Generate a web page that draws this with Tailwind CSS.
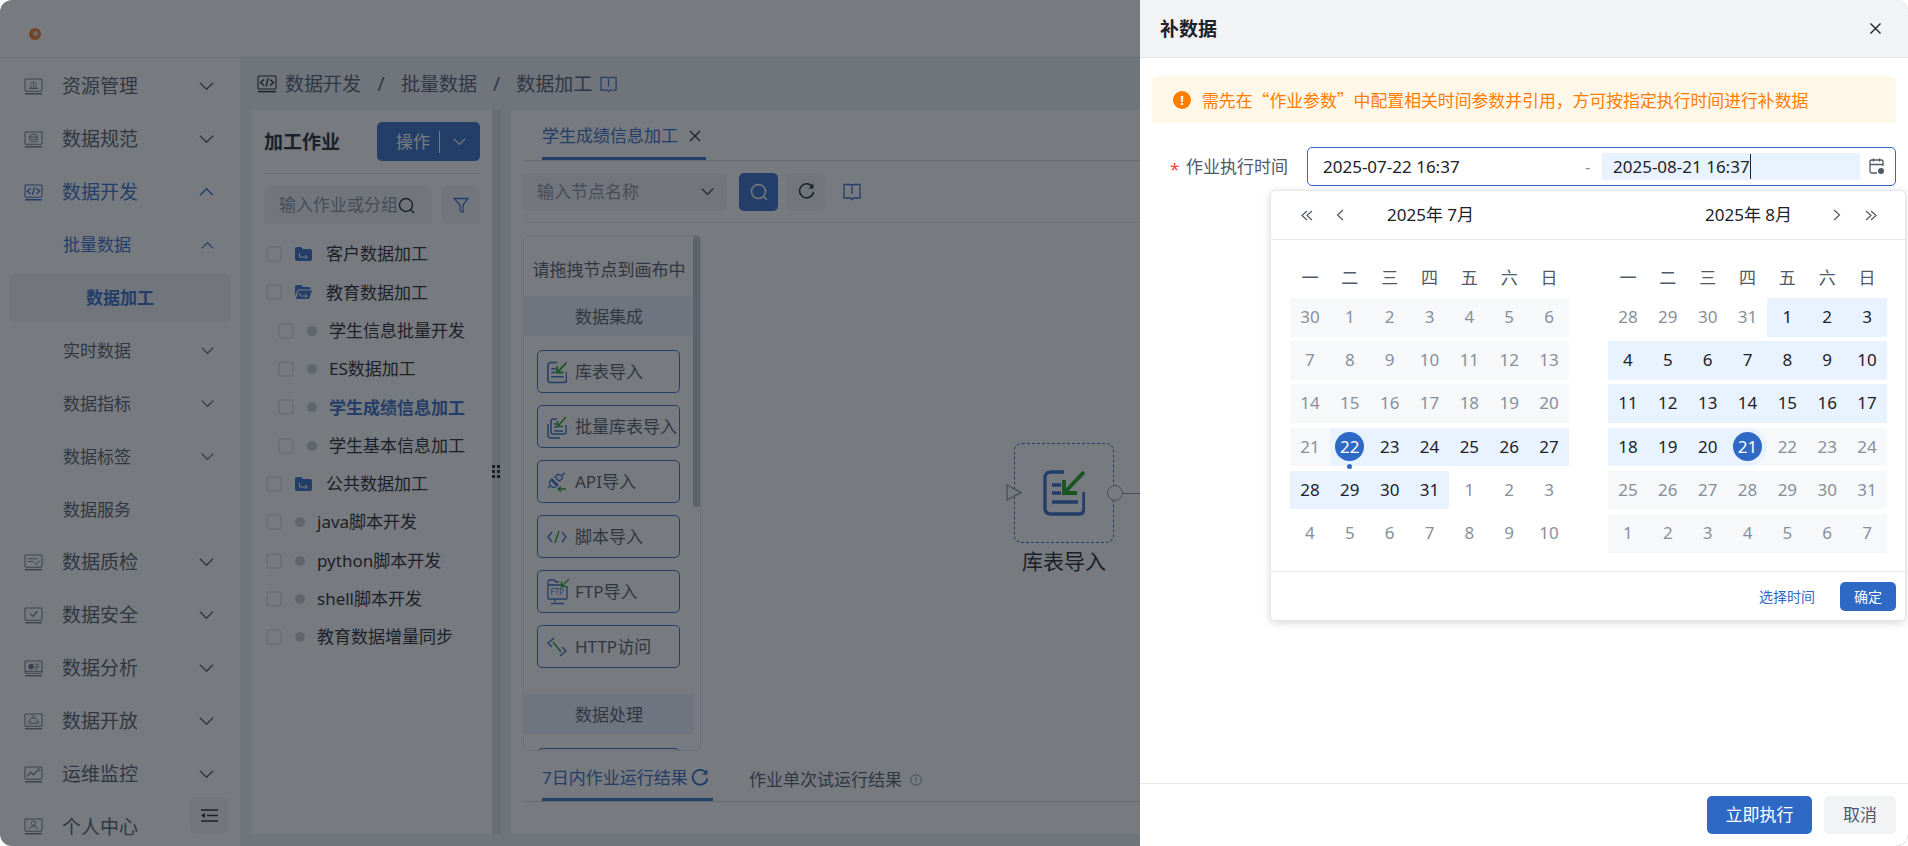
<!DOCTYPE html>
<html lang="zh-CN">
<head>
  <meta charset="UTF-8">
  <title>补数据</title>
  <script src="https://cdn.jsdelivr.net/npm/@tailwindcss/browser@4"></script>
</head>
<body class="bg-white overflow-hidden [font-family:'Noto_Sans','Noto_Sans_CJK_SC',sans-serif]">
<svg class="hidden">
  <symbol id="imp" viewBox="0 0 42 46">
    <path d="M21 2H8Q2 2 2 8V38Q2 44 8 44H36Q41 44 41 38V22M9 15H18M9 23H18M9 32H35" fill="none" stroke="#2f69c6" stroke-width="3.4"/>
    <path d="M41 2 22 22M21 10V23H34" fill="none" stroke="#14a014" stroke-width="3.8"/>
  </symbol>
  <symbol id="mon" viewBox="0 0 20 18">
    <rect x="1" y="1" width="18" height="13" rx="1" fill="none" stroke="currentColor" stroke-width="1.1"/>
    <path d="M1 16.6H19" stroke="currentColor" stroke-width="1.5"/>
  </symbol>
  <symbol id="down" viewBox="0 0 16 10">
    <path d="M1 1.5 8 8.5 15 1.5" fill="none" stroke="currentColor" stroke-width="1.5"/>
  </symbol>
  <symbol id="up" viewBox="0 0 16 10">
    <path d="M1 8.5 8 1.5 15 8.5" fill="none" stroke="currentColor" stroke-width="1.5"/>
  </symbol>
  <symbol id="fold" viewBox="0 0 17 14">
    <path d="M0 2Q0 0 2 0H6L8 2H15Q17 2 17 4V12Q17 14 15 14H2Q0 14 0 12Z" fill="#2f69c6"/>
    <path d="M4.5 6V10H12M10 8 12.3 10 10 12" fill="none" stroke="#fff" stroke-width="1"/>
  </symbol>
  <symbol id="foldopen" viewBox="0 0 17 14">
    <path d="M0 2Q0 0 2 0H6L8 2H14Q15.500 2 15.500 3.500V4.500H3L0 11Z" fill="#2f69c6"/>
    <path d="M3.500 5.500H17L14.500 13Q14.200 14 13 14H1Z" fill="#2f69c6"/>
    <path d="M5 8V11H12M10 9 12.300 11 10 13" fill="none" stroke="#fff" stroke-width="1"/>
  </symbol>
  <symbol id="book" viewBox="0 0 18 18">
    <path d="M1 1.5H7Q9 1.5 9 3.5 9 1.5 11 1.5H17V15H10.5L9 16.5 7.5 15H1ZM9 4V11" fill="none" stroke="#2f69c6" stroke-width="1.3"/>
  </symbol>
</svg>

<div class="relative h-[846px] w-[1908px] overflow-hidden rounded-[12px] bg-white">
  <!-- page under the mask -->
  <div class="h-full flex flex-col">
    <div class="h-[58px] shrink-0 flex items-center pl-[29px] pt-[10px] border-b border-[#e5e6eb]">
      <div class="w-[12px] h-[12px] rounded-full bg-[#f5781e] flex items-center justify-center"><div class="w-[5px] h-[5px] rounded-full bg-[#e8d8c8]"></div></div>
    </div>
    <div class="flex-1 flex min-h-0">
      <!-- 사이드바 -->
      <div class="relative w-[240px] shrink-0 pt-[2px] text-[#4e5969]">
        <div class="h-[52.9px] flex items-center pl-[24px] pr-[26px] text-[19px]">
          <svg class="w-[19px] h-[17px] text-[#6b7585]" viewBox="0 0 20 18"><use href="#mon"/><path d="M5 11H15M7.500 11V8M10 11V5.500M12.500 11V8M6 6.500 10 4 14 6.500" fill="none" stroke="currentColor"/></svg><span class="ml-[19px] flex-1">资源管理</span><svg class="w-[15px] h-[10px]"><use href="#down"/></svg>
        </div>
        <div class="h-[52.9px] flex items-center pl-[24px] pr-[26px] text-[19px]">
          <svg class="w-[19px] h-[17px] text-[#6b7585]" viewBox="0 0 20 18"><use href="#mon"/><ellipse cx="10" cy="5" rx="4" ry="1.500" fill="none" stroke="currentColor"/><path d="M6 5V10Q6 11.500 10 11.500T14 10V5M6 7.500Q6 9 10 9T14 7.500" fill="none" stroke="currentColor"/></svg><span class="ml-[19px] flex-1">数据规范</span><svg class="w-[15px] h-[10px]"><use href="#down"/></svg>
        </div>
        <div class="h-[52.9px] flex items-center pl-[24px] pr-[26px] text-[19px] text-[#2f69c6]">
          <svg class="w-[19px] h-[17px]" viewBox="0 0 20 18"><use href="#mon"/><path d="M7 4.500 3.500 7.500 7 10.500M13 4.500 16.500 7.500 13 10.500M11 3.500 9 11.500" fill="none" stroke="currentColor" stroke-width="1.400"/></svg><span class="ml-[19px] flex-1">数据开发</span><svg class="w-[15px] h-[10px]"><use href="#up"/></svg>
        </div>
        <div class="h-[52.9px] flex items-center pl-[63px] pr-[26px] text-[17px] text-[#2f69c6]">
          <span class="flex-1">批量数据</span><svg class="w-[13px] h-[9px]"><use href="#up"/></svg>
        </div>
        <div class="h-[52.9px] flex items-center px-[10px] text-[17px]">
          <div class="w-[221px] h-[48px] rounded-[5px] bg-[#f2f3f5] text-[#2f69c6] font-bold flex items-center justify-center">数据加工</div>
        </div>
        <div class="h-[52.9px] flex items-center pl-[63px] pr-[26px] text-[17px]">
          <span class="flex-1">实时数据</span><svg class="w-[13px] h-[9px]"><use href="#down"/></svg>
        </div>
        <div class="h-[52.9px] flex items-center pl-[63px] pr-[26px] text-[17px]">
          <span class="flex-1">数据指标</span><svg class="w-[13px] h-[9px]"><use href="#down"/></svg>
        </div>
        <div class="h-[52.9px] flex items-center pl-[63px] pr-[26px] text-[17px]">
          <span class="flex-1">数据标签</span><svg class="w-[13px] h-[9px]"><use href="#down"/></svg>
        </div>
        <div class="h-[52.9px] flex items-center pl-[63px] pr-[26px] text-[17px]">
          <span class="flex-1">数据服务</span>
        </div>
        <div class="h-[52.9px] flex items-center pl-[24px] pr-[26px] text-[19px]">
          <svg class="w-[19px] h-[17px] text-[#6b7585]" viewBox="0 0 20 18"><use href="#mon"/><path d="M4 5H14M4 8H10M11 9 13 11 16 7" fill="none" stroke="currentColor"/></svg><span class="ml-[19px] flex-1">数据质检</span><svg class="w-[15px] h-[10px]"><use href="#down"/></svg>
        </div>
        <div class="h-[52.9px] flex items-center pl-[24px] pr-[26px] text-[19px]">
          <svg class="w-[19px] h-[17px] text-[#6b7585]" viewBox="0 0 20 18"><use href="#mon"/><path d="M6.500 7 9.500 10 14 4.500" fill="none" stroke="currentColor" stroke-width="1.300"/></svg><span class="ml-[19px] flex-1">数据安全</span><svg class="w-[15px] h-[10px]"><use href="#down"/></svg>
        </div>
        <div class="h-[52.9px] flex items-center pl-[24px] pr-[26px] text-[19px]">
          <svg class="w-[19px] h-[17px] text-[#6b7585]" viewBox="0 0 20 18"><use href="#mon"/><circle cx="7.500" cy="7" r="3" fill="currentColor"/><path d="M11.500 4.500H16M11.500 7H16M11.500 9.500H14" stroke="currentColor" stroke-width="1.300"/><path d="M1 12H19" stroke="currentColor"/></svg><span class="ml-[19px] flex-1">数据分析</span><svg class="w-[15px] h-[10px]"><use href="#down"/></svg>
        </div>
        <div class="h-[52.9px] flex items-center pl-[24px] pr-[26px] text-[19px]">
          <svg class="w-[19px] h-[17px] text-[#6b7585]" viewBox="0 0 20 18"><use href="#mon"/><circle cx="10" cy="4.500" r="1.500" fill="none" stroke="currentColor"/><circle cx="6" cy="10" r="1.500" fill="none" stroke="currentColor"/><circle cx="14" cy="10" r="1.500" fill="none" stroke="currentColor"/><path d="M8 5 5.500 8M12 5 14.500 8M8 11H12" fill="none" stroke="currentColor"/></svg><span class="ml-[19px] flex-1">数据开放</span><svg class="w-[15px] h-[10px]"><use href="#down"/></svg>
        </div>
        <div class="h-[52.9px] flex items-center pl-[24px] pr-[26px] text-[19px]">
          <svg class="w-[19px] h-[17px] text-[#6b7585]" viewBox="0 0 20 18"><use href="#mon"/><path d="M3.500 11 7 6.500 10 9.500 14 5" fill="none" stroke="currentColor" stroke-width="1.200"/><circle cx="15.500" cy="4" r="1.400" fill="none" stroke="currentColor"/></svg><span class="ml-[19px] flex-1">运维监控</span><svg class="w-[15px] h-[10px]"><use href="#down"/></svg>
        </div>
        <div class="h-[52.9px] flex items-center pl-[24px] pr-[26px] text-[19px]">
          <svg class="w-[19px] h-[17px] text-[#6b7585]" viewBox="0 0 20 18"><use href="#mon"/><circle cx="10" cy="5.500" r="2.300" fill="none" stroke="currentColor"/><path d="M5.500 12Q6 8.500 10 8.500T14.500 12" fill="none" stroke="currentColor"/></svg><span class="ml-[19px] flex-1">个人中心</span>
        </div>
        <div class="absolute left-[190px] bottom-[12px] w-[38px] h-[37px] rounded-[5px] bg-[#f2f3f5] flex items-center justify-center">
          <svg class="w-[17px] h-[13px]" viewBox="0 0 17 13"><path d="M0 1H17M6 6.5H17M0 12H17" stroke="#1d2129" stroke-width="1.4"/><path d="M0 6.5 4 4V9Z" fill="#1d2129"/></svg>
        </div>
      </div>

      <!-- 메인 콘텐츠 -->
      <div class="flex-1 min-w-0 bg-[#edf0f5] flex flex-col">
        <div class="h-[52px] shrink-0 flex items-center pl-[17px] text-[19px] text-[#4e5969]">
          <svg class="w-[20px] h-[18px] text-[#1d2129]" viewBox="0 0 20 18"><use href="#mon"/><path d="M7 4.500 3.500 7.500 7 10.500M13 4.500 16.500 7.500 13 10.500M11 3.500 9 11.500" fill="none" stroke="currentColor" stroke-width="1.400"/></svg>
          <span class="ml-[8px]">数据开发</span><span class="mx-[16.5px]">/</span><span>批量数据</span><span class="mx-[16px]">/</span><span>数据加工</span>
          <svg class="ml-[8px] w-[17px] h-[17px]"><use href="#book"/></svg>
        </div>
        <div class="flex-1 min-h-0 flex pl-[12px] pb-[12px]">
          <!-- left tree -->
          <div class="w-[240px] shrink-0 bg-white px-[12px] pt-[12px]">
            <div class="flex items-center justify-between h-[39px]">
              <span class="pt-px text-[19px] font-bold text-[#1d2129]">加工作业</span>
              <div class="w-[103px] h-[39px] rounded-[5px] bg-[#2f69c6] text-white flex items-center pl-[19px] text-[17px]">
                操作<span class="ml-[9px] h-[22px] w-px bg-white"></span>
                <svg class="ml-[13px] w-[13px] h-[9px]"><use href="#down"/></svg>
              </div>
            </div>
            <div class="mt-[12px] border-t border-[#e5e6eb]"></div>
            <div class="mt-[12px] flex justify-between">
              <div class="w-[168px] h-[38px] rounded-[5px] bg-[#f2f3f5] flex items-center pl-[15px] text-[17px] text-[#86909c]">
                <span class="whitespace-nowrap">输入作业或分组</span>
                <svg class="w-[17px] h-[17px] shrink-0" viewBox="0 0 17 17"><circle cx="8" cy="8" r="6.5" fill="none" stroke="#1d2129" stroke-width="1.4"/><path d="M12.5 12.5 16 16" stroke="#1d2129" stroke-width="1.4"/></svg>
              </div>
              <div class="w-[38px] h-[38px] rounded-[5px] bg-[#f2f3f5] flex items-center justify-center">
                <svg class="w-[16px] h-[16px]" viewBox="0 0 16 16"><path d="M1 1.5H15L10 8V15L7 13.5V8Z" fill="none" stroke="#2f69c6" stroke-width="1.3"/></svg>
              </div>
            </div>
            <div class="mt-[11px] text-[17px] text-[#1d2129]">
              <div class="h-[38.3px] flex items-center pl-[2px]"><span class="w-[16px] h-[16px] border-2 border-[#e5e6eb] rounded-[4px]"></span><svg class="ml-[13px] w-[17px] h-[14px]"><use href="#fold"/></svg><span class="ml-[14px]">客户数据加工</span></div>
              <div class="h-[38.3px] flex items-center pl-[2px]"><span class="w-[16px] h-[16px] border-2 border-[#e5e6eb] rounded-[4px]"></span><svg class="ml-[13px] w-[17px] h-[14px]"><use href="#foldopen"/></svg><span class="ml-[14px]">教育数据加工</span></div>
              <div class="h-[38.3px] flex items-center pl-[14px]"><span class="w-[16px] h-[16px] border-2 border-[#e5e6eb] rounded-[4px]"></span><span class="ml-[13px] w-[10px] h-[10px] rounded-full bg-[#c9cdd4]"></span><span class="ml-[12px]">学生信息批量开发</span></div>
              <div class="h-[38.3px] flex items-center pl-[14px]"><span class="w-[16px] h-[16px] border-2 border-[#e5e6eb] rounded-[4px]"></span><span class="ml-[13px] w-[10px] h-[10px] rounded-full bg-[#c9cdd4]"></span><span class="ml-[12px]">ES数据加工</span></div>
              <div class="h-[38.3px] flex items-center pl-[14px]"><span class="w-[16px] h-[16px] border-2 border-[#e5e6eb] rounded-[4px]"></span><span class="ml-[13px] w-[10px] h-[10px] rounded-full bg-[#c9cdd4]"></span><span class="ml-[12px] font-bold text-[#2f69c6]">学生成绩信息加工</span></div>
              <div class="h-[38.3px] flex items-center pl-[14px]"><span class="w-[16px] h-[16px] border-2 border-[#e5e6eb] rounded-[4px]"></span><span class="ml-[13px] w-[10px] h-[10px] rounded-full bg-[#c9cdd4]"></span><span class="ml-[12px]">学生基本信息加工</span></div>
              <div class="h-[38.3px] flex items-center pl-[2px]"><span class="w-[16px] h-[16px] border-2 border-[#e5e6eb] rounded-[4px]"></span><svg class="ml-[13px] w-[17px] h-[14px]"><use href="#fold"/></svg><span class="ml-[14px]">公共数据加工</span></div>
              <div class="h-[38.3px] flex items-center pl-[2px]"><span class="w-[16px] h-[16px] border-2 border-[#e5e6eb] rounded-[4px]"></span><span class="ml-[13px] w-[10px] h-[10px] rounded-full bg-[#c9cdd4]"></span><span class="ml-[12px]">java脚本开发</span></div>
              <div class="h-[38.3px] flex items-center pl-[2px]"><span class="w-[16px] h-[16px] border-2 border-[#e5e6eb] rounded-[4px]"></span><span class="ml-[13px] w-[10px] h-[10px] rounded-full bg-[#c9cdd4]"></span><span class="ml-[12px]">python脚本开发</span></div>
              <div class="h-[38.3px] flex items-center pl-[2px]"><span class="w-[16px] h-[16px] border-2 border-[#e5e6eb] rounded-[4px]"></span><span class="ml-[13px] w-[10px] h-[10px] rounded-full bg-[#c9cdd4]"></span><span class="ml-[12px]">shell脚本开发</span></div>
              <div class="h-[38.3px] flex items-center pl-[2px]"><span class="w-[16px] h-[16px] border-2 border-[#e5e6eb] rounded-[4px]"></span><span class="ml-[13px] w-[10px] h-[10px] rounded-full bg-[#c9cdd4]"></span><span class="ml-[12px]">教育数据增量同步</span></div>
            </div>
          </div>
          <!-- splitter -->
          <div class="relative w-[9px] shrink-0 bg-[#dadce0] mr-[10px]">
            <div class="absolute left-0 top-[355px] grid grid-cols-2 gap-x-[2px] gap-y-[2px]">
              <i class="w-[3px] h-[3px] bg-[#1d2129]"></i><i class="w-[3px] h-[3px] bg-[#1d2129]"></i><i class="w-[3px] h-[3px] bg-[#1d2129]"></i><i class="w-[3px] h-[3px] bg-[#1d2129]"></i><i class="w-[3px] h-[3px] bg-[#1d2129]"></i><i class="w-[3px] h-[3px] bg-[#1d2129]"></i>
            </div>
          </div>
          <!-- job editor -->
          <div class="flex-1 min-w-0 bg-white px-[12px] flex flex-col overflow-hidden">
            <div class="h-[51px] shrink-0 border-b border-[#d8dadf] flex items-end pl-[19px]">
              <div class="h-[51px] w-[164px] border-b-[3px] border-[#2f69c6] flex items-center pt-[5px] text-[17px] text-[#2f69c6] whitespace-nowrap">
                学生成绩信息加工
                <svg class="ml-[11px] w-[12px] h-[12px]" viewBox="0 0 12 12"><path d="M1 1 11 11M11 1 1 11" stroke="#1d2129" stroke-width="1.200"/></svg>
              </div>
            </div>
            <div class="h-[62px] shrink-0 border-b border-[#e5e6eb] flex items-center">
              <div class="w-[204px] h-[38px] rounded-[5px] bg-[#f2f3f5] flex items-center pl-[14px] pr-[13px] text-[17px] text-[#86909c]">
                <span class="flex-1 pt-px">输入节点名称</span><svg class="w-[13px] h-[9px] text-[#1d2129]"><use href="#down"/></svg>
              </div>
              <div class="ml-[12px] w-[39px] h-[38px] rounded-[5px] bg-[#2f69c6] flex items-center justify-center">
                <svg class="w-[18px] h-[18px]" viewBox="0 0 18 18"><circle cx="8.5" cy="8.5" r="7" fill="none" stroke="#fff" stroke-width="1.5"/><path d="M13.5 13.5 17 17" stroke="#fff" stroke-width="1.5"/></svg>
              </div>
              <div class="ml-[9px] w-[38px] h-[38px] rounded-[5px] bg-[#f2f3f5] flex items-center justify-center">
                <svg class="w-[17px] h-[17px]" viewBox="0 0 17 17"><path d="M14.5 4A7 7 0 1 0 15.5 9" fill="none" stroke="#1d2129" stroke-width="1.5"/><path d="M15.5 0.5V5.5H10.5Z" fill="#1d2129"/></svg>
              </div>
              <svg class="ml-[18px] w-[18px] h-[18px]"><use href="#book"/></svg>
            </div>
            <div class="relative mt-[12px] h-[516px] shrink-0">
              <!-- node palette -->
              <div class="relative w-[178px] h-[516px] border border-[#e5e6eb] rounded-[5px] overflow-hidden">
                <div class="w-[170px] text-[17px] text-[#4e5969]">
                  <div class="h-[60px] pt-[8px] flex items-center justify-center whitespace-nowrap">请拖拽节点到画布中</div>
                  <div class="h-[40px] pt-[2px] bg-[#e8f3ff] flex items-center justify-center">数据集成</div>
                  <div class="pl-[13px] pt-[14px] flex flex-col gap-[12px]">
                    <div class="w-[143px] h-[43px] pt-px border border-[#2f69c6] rounded-[5px] flex items-center pl-[9px] whitespace-nowrap">
                      <svg class="w-[20px] h-[23px] shrink-0"><use href="#imp"/></svg><span class="ml-[8px]">库表导入</span>
                    </div>
                    <div class="w-[143px] h-[43px] pt-px border border-[#2f69c6] rounded-[5px] flex items-center pl-[9px] whitespace-nowrap">
                      <svg class="w-[20px] h-[23px] shrink-0" viewBox="0 0 20 23"><path d="M10 3H6Q4 3 4 5V16Q4 18 6 18H17Q19 18 19 16V9M7 8H10M7 11H10M7 15H16M1 8V19Q1 22 4 22H13" fill="none" stroke="#2f69c6" stroke-width="1.5"/><path d="M19 1 11 10M10.500 5V10.500H16" fill="none" stroke="#14a014" stroke-width="1.5"/></svg><span class="ml-[8px]">批量库表导入</span>
                    </div>
                    <div class="w-[143px] h-[43px] pt-px border border-[#2f69c6] rounded-[5px] flex items-center pl-[9px] whitespace-nowrap">
                      <svg class="w-[20px] h-[20px] shrink-0" viewBox="0 0 20 20"><path d="M1 16 4 13M4 8 10 14M5 7 11 13 8 15Q6 16 5 15L3 13Q2 11 3 9ZM8 5 12 9 15 7Q16 5 15 4L13 3Q11 2 10 3ZM15 3 18 1" fill="none" stroke="#2f69c6" stroke-width="1.3"/><path d="M19 17H11M14 14.500 11 17 14 19.500" fill="none" stroke="#14a014" stroke-width="1.3"/></svg><span class="ml-[8px]">API导入</span>
                    </div>
                    <div class="w-[143px] h-[43px] pt-px border border-[#2f69c6] rounded-[5px] flex items-center pl-[9px] whitespace-nowrap">
                      <svg class="w-[20px] h-[14px] shrink-0" viewBox="0 0 20 14"><path d="M5 2 1 7 5 12M15 2 19 7 15 12" fill="none" stroke="#2f69c6" stroke-width="1.4"/><path d="M12 1 8 13" fill="none" stroke="#14a014" stroke-width="1.4"/></svg><span class="ml-[8px]">脚本导入</span>
                    </div>
                    <div class="w-[143px] h-[43px] pt-px border border-[#2f69c6] rounded-[5px] flex items-center pl-[9px] whitespace-nowrap">
                      <svg class="w-[23px] h-[28px] shrink-0" viewBox="0 0 23 28"><path d="M1 4V20Q1 21 2 21H19Q20 21 20 20V8M1 7H14M1 4Q1 2 3 2H7L9 4H12M8 21V24M4 25.500H17" fill="none" stroke="#2f69c6" stroke-width="1.3"/><path d="M22 1 15 8M14.500 3.500V8.500H19.500" fill="none" stroke="#14a014" stroke-width="1.3"/><text x="3.500" y="17" font-size="8" fill="#2f69c6">FTP</text></svg><span class="ml-[5px]">FTP导入</span>
                    </div>
                    <div class="w-[143px] h-[43px] pt-px border border-[#2f69c6] rounded-[5px] flex items-center pl-[9px] whitespace-nowrap">
                      <svg class="w-[20px] h-[20px] shrink-0" viewBox="0 0 20 20"><path d="M7 1 1 6 5 10M13 19 19 14 15 10" fill="none" stroke="#2f69c6" stroke-width="1.4"/><path d="M6 5 14 15" fill="none" stroke="#14a014" stroke-width="1.4"/></svg><span class="ml-[8px]">HTTP访问</span>
                    </div>
                  </div>
                  <div class="mt-[26px] h-[40px] pt-[2px] bg-[#e8f3ff] flex items-center justify-center">数据处理</div>
                  <div class="ml-[13px] mt-[14px] w-[143px] h-[43px] border border-[#2f69c6] rounded-[5px]"></div>
                </div>
                <div class="absolute right-0 top-0 w-[7px] h-[271px] rounded-[4px] bg-[#c0c3c9]"></div>
              </div>
              <!-- canvas node -->
              <div class="absolute left-[491px] top-[208px] w-[100px] h-[100px] border-[1.5px] border-dashed border-[#2f69c6] rounded-[8px] flex items-center justify-center">
                <svg class="w-[42px] h-[46px]"><use href="#imp"/></svg>
                <svg class="absolute left-[-9px] top-[40px] w-[17px] h-[17px]" viewBox="0 0 17 17"><path d="M1 1 15 8.500 1 16Z" fill="#fff" stroke="#8a8f98" stroke-width="1.3"/></svg>
                <span class="absolute left-[92px] top-[41px] w-[16px] h-[16px] rounded-full border-[1.5px] border-[#8a8f98] bg-white"></span>
                <span class="absolute left-[108px] top-[49px] w-[18px] h-px bg-[#8a8f98]"></span>
                <span class="absolute left-0 right-0 top-[102px] text-center text-[21px] text-[#1d2129] whitespace-nowrap">库表导入</span>
              </div>
            </div>
            <div class="h-[51px] shrink-0 border-b border-[#d8dadf] flex items-end pl-[19px] text-[17px] whitespace-nowrap">
              <div class="h-[51px] w-[171px] border-b-[3px] border-[#2f69c6] flex items-center pt-[8px] text-[#2f69c6]">
                7日内作业运行结果
                <svg class="ml-[3px] w-[18px] h-[18px]" viewBox="0 0 17 17"><path d="M14.500 4A7 7 0 1 0 15.500 9" fill="none" stroke="#2f69c6" stroke-width="1.8"/><path d="M15.500 0.500V5.500H10.500Z" fill="#2f69c6"/></svg>
              </div>
              <div class="h-[51px] ml-[36px] pt-[8px] flex items-center text-[#4e5969]">
                作业单次试运行结果
                <svg class="ml-[8px] w-[12px] h-[12px]" viewBox="0 0 12 12"><circle cx="6" cy="6" r="5.300" fill="none" stroke="#86909c"/><path d="M6 3V7M6 8V9.200" stroke="#86909c"/></svg>
              </div>
            </div>
          </div>
        </div>
      </div>
    </div>
  </div>

  <!-- mask -->
  <div class="absolute inset-0 bg-[#1d2129]/60"></div>

  <!-- drawer -->
  <div class="absolute top-0 right-0 bottom-0 w-[768px] bg-white flex flex-col text-[#1d2129]">
    <div class="h-[58px] shrink-0 bg-[#f2f3f5] border-b border-[#e5e6eb] flex items-center pl-[20px] pr-[26px] justify-between">
      <span class="pt-px text-[19px] font-bold">补数据</span>
      <svg class="w-[13px] h-[13px]" viewBox="0 0 13 13"><path d="M1.500 1.500 11.500 11.500M11.500 1.500 1.500 11.500" stroke="#1d2129" stroke-width="1.400"/></svg>
    </div>
    <div class="mx-[12px] mt-[18px] h-[47px] rounded-[5px] bg-[#fff7e8] flex items-center pl-[21px] text-[#ff7d00]">
      <span class="w-[18px] h-[18px] rounded-full bg-[#ff7d00] text-white text-[13px] font-bold leading-[18px] text-center">!</span>
      <span class="ml-[11px] text-[16.85px] whitespace-nowrap [font-family:'Noto_Sans_CJK_SC',sans-serif]">需先在“作业参数”中配置相关时间参数并引用，方可按指定执行时间进行补数据</span>
    </div>
    <div class="relative mt-[24px] h-[39px] flex items-center text-[17px]">
      <span class="ml-[30px] pt-[5px] text-[#f53f3f] w-[16px]">*</span>
      <span class="text-[#4e5969] w-[121px]">作业执行时间</span>
      <div class="w-[589px] h-[39px] border border-[#2f69c6] rounded-[5px] flex items-center pl-[15px]">
        <span class="w-[262px]">2025-07-22 16:37</span>
        <span class="text-[#86909c] w-[17px]">-</span>
        <div class="w-[258px] h-[27px] bg-[#e8f3ff] flex items-center pl-[11px]"><span class="border-r border-[#1d2129]">2025-08-21 16:37</span></div>
        <svg class="ml-[8px] w-[17px] h-[17px]" viewBox="0 0 17 17"><path d="M15 8V3.500Q15 2 13.500 2H3.500Q2 2 2 3.500V13.500Q2 15 3.500 15H9M2 6.500H15M5.500 0.500V3.500M11.500 0.500V3.500" fill="none" stroke="#4e5969" stroke-width="1.300"/><circle cx="13" cy="13" r="3" fill="#4e5969"/></svg>
      </div>
    </div>

    <!-- date range popup -->
    <div class="absolute left-[130px] top-[190px] w-[636px] h-[431px] bg-white border border-[#e5e6eb] rounded-[5px] shadow-[0_2px_8px_rgba(0,0,0,0.15)] flex flex-col text-[17px]">
      <div class="h-[49px] shrink-0 border-b border-[#e5e6eb] flex items-center text-[#1d2129] relative">
        <svg class="absolute left-[30px] top-[19px] w-[12px] h-[11px]" viewBox="0 0 12 11"><path d="M6 1 1 5.500 6 10M11 1 6 5.500 11 10" fill="none" stroke="#4e5969" stroke-width="1.200"/></svg>
        <svg class="absolute left-[65px] top-[18px] w-[8px] h-[12px]" viewBox="0 0 8 12"><path d="M7 1 1.500 6 7 11" fill="none" stroke="#4e5969" stroke-width="1.200"/></svg>
        <span class="ml-[116px]">2025年 7月</span>
        <span class="ml-[231px]">2025年 8月</span>
        <svg class="absolute left-[562px] top-[18px] w-[8px] h-[12px]" viewBox="0 0 8 12"><path d="M1 1 6.500 6 1 11" fill="none" stroke="#4e5969" stroke-width="1.200"/></svg>
        <svg class="absolute left-[594px] top-[19px] w-[12px] h-[11px]" viewBox="0 0 12 11"><path d="M1 1 6 5.500 1 10M6 1 11 5.500 6 10" fill="none" stroke="#4e5969" stroke-width="1.200"/></svg>
      </div>
      <div class="flex-1 flex pl-[19px] gap-[39px] leading-[38.7px] text-center">
        <!-- 7월 -->
        <div class="w-[279px]">
          <div class="grid grid-cols-7 h-[58px] leading-[76px] text-[#4e5969]"><span>一</span><span>二</span><span>三</span><span>四</span><span>五</span><span>六</span><span>日</span></div>
          <div class="flex flex-col gap-[4.5px]">
            <div class="grid grid-cols-7 h-[38.7px] bg-[#f7f8fa] text-[#86909c]"><span>30</span><span>1</span><span>2</span><span>3</span><span>4</span><span>5</span><span>6</span></div>
            <div class="grid grid-cols-7 h-[38.7px] bg-[#f7f8fa] text-[#86909c]"><span>7</span><span>8</span><span>9</span><span>10</span><span>11</span><span>12</span><span>13</span></div>
            <div class="grid grid-cols-7 h-[38.7px] bg-[#f7f8fa] text-[#86909c]"><span>14</span><span>15</span><span>16</span><span>17</span><span>18</span><span>19</span><span>20</span></div>
            <div class="grid grid-cols-7 h-[38.7px] bg-[#e8f3ff]">
              <span class="bg-[#f7f8fa] text-[#86909c]">21</span>
              <span class="relative flex items-center justify-center"><b class="w-[29px] h-[29px] rounded-full bg-[#2f69c6] text-white font-normal leading-[29px]">22</b><i class="absolute left-[17.500px] bottom-[-3px] w-[5px] h-[5px] rounded-full bg-[#2f69c6]"></i></span>
              <span>23</span><span>24</span><span>25</span><span>26</span><span>27</span>
            </div>
            <div class="grid grid-cols-7 h-[38.7px]">
              <span class="bg-[#e8f3ff]">28</span><span class="bg-[#e8f3ff]">29</span><span class="bg-[#e8f3ff]">30</span><span class="bg-[#e8f3ff]">31</span>
              <span class="text-[#86909c]">1</span><span class="text-[#86909c]">2</span><span class="text-[#86909c]">3</span>
            </div>
            <div class="grid grid-cols-7 h-[38.7px] text-[#86909c]"><span>4</span><span>5</span><span>6</span><span>7</span><span>8</span><span>9</span><span>10</span></div>
          </div>
        </div>
        <!-- 8월 -->
        <div class="w-[279px]">
          <div class="grid grid-cols-7 h-[58px] leading-[76px] text-[#4e5969]"><span>一</span><span>二</span><span>三</span><span>四</span><span>五</span><span>六</span><span>日</span></div>
          <div class="flex flex-col gap-[4.5px]">
            <div class="grid grid-cols-7 h-[38.7px]">
              <span class="text-[#86909c]">28</span><span class="text-[#86909c]">29</span><span class="text-[#86909c]">30</span><span class="text-[#86909c]">31</span>
              <span class="bg-[#e8f3ff]">1</span><span class="bg-[#e8f3ff]">2</span><span class="bg-[#e8f3ff]">3</span>
            </div>
            <div class="grid grid-cols-7 h-[38.7px] bg-[#e8f3ff]"><span>4</span><span>5</span><span>6</span><span>7</span><span>8</span><span>9</span><span>10</span></div>
            <div class="grid grid-cols-7 h-[38.7px] bg-[#e8f3ff]"><span>11</span><span>12</span><span>13</span><span>14</span><span>15</span><span>16</span><span>17</span></div>
            <div class="grid grid-cols-7 h-[38.7px] bg-[#f7f8fa]">
              <span class="bg-[#e8f3ff]">18</span><span class="bg-[#e8f3ff]">19</span><span class="bg-[#e8f3ff]">20</span>
              <span class="bg-[#e8f3ff] rounded-r-full flex items-center justify-center"><b class="w-[29px] h-[29px] rounded-full bg-[#2f69c6] text-white font-normal leading-[29px]">21</b></span>
              <span class="text-[#86909c]">22</span><span class="text-[#86909c]">23</span><span class="text-[#86909c]">24</span>
            </div>
            <div class="grid grid-cols-7 h-[38.7px] bg-[#f7f8fa] text-[#86909c]"><span>25</span><span>26</span><span>27</span><span>28</span><span>29</span><span>30</span><span>31</span></div>
            <div class="grid grid-cols-7 h-[38.7px] bg-[#f7f8fa] text-[#86909c]"><span>1</span><span>2</span><span>3</span><span>4</span><span>5</span><span>6</span><span>7</span></div>
          </div>
        </div>
      </div>
      <div class="h-[49px] shrink-0 border-t border-[#e5e6eb] flex items-center justify-end pr-[9px] gap-[25px] text-[14px]">
        <span class="text-[#2f69c6]">选择时间</span>
        <span class="w-[56px] h-[29px] rounded-[5px] bg-[#2f69c6] text-white flex items-center justify-center">确定</span>
      </div>
    </div>

    <div class="mt-auto h-[63px] border-t border-[#e5e6eb] flex items-start justify-end pt-[12px] pr-[12px] gap-[12px] text-[17px]">
      <span class="w-[105px] h-[38px] rounded-[5px] bg-[#2f69c6] text-white flex items-center justify-center">立即执行</span>
      <span class="w-[72px] h-[38px] rounded-[5px] bg-[#f2f3f5] text-[#4e5969] flex items-center justify-center">取消</span>
    </div>
  </div>
</div>
</body>
</html>
